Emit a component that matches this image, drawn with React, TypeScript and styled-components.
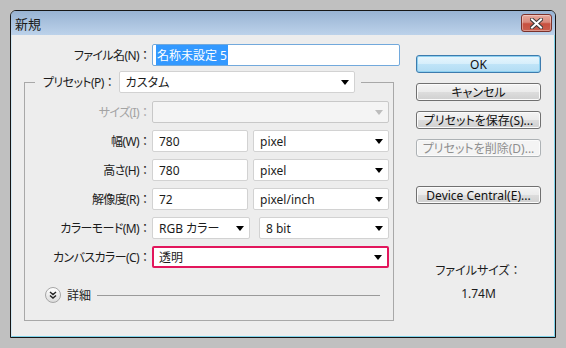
import styled, { createGlobalStyle } from "styled-components";

const GlobalStyle = createGlobalStyle`
  html, body {
    margin: 0;
    padding: 0;
  }
  body {
    width: 566px;
    height: 348px;
    overflow: hidden;
    background: #c0c0c0;
    font-family: "Noto Sans", "Noto Sans CJK JP", sans-serif;
    font-size: 12px;
    color: #1c1c1c;
    font-feature-settings: "palt";
  }
`;

const Stage = styled.div`
  padding: 10px;
`;

const Window = styled.div`
  width: 546px;
  height: 328px;
  box-sizing: border-box;
  border: 1px solid #161616;
  border-radius: 6px 6px 0 0;
  overflow: hidden;
  display: flex;
  flex-direction: column;
  background: #b9d0e8;
`;

const TitleBar = styled.div`
  height: 24px;
  flex: none;
  display: flex;
  align-items: center;
  justify-content: space-between;
  padding: 0 3px 0 4px;
  background: linear-gradient(#98b3d3, #bcd2ea);
`;

const Title = styled.span`
  font-size: 13px;
  color: #1a1a1a;
`;

const CloseButton = styled.div`
  width: 31px;
  height: 18px;
  box-sizing: border-box;
  border: 1px solid #7b312a;
  border-radius: 3px;
  display: flex;
  align-items: center;
  justify-content: center;
  background: linear-gradient(#e7a99d 0%, #d98a7c 45%, #c8503f 55%, #c95f4e 100%);
  box-shadow: inset 0 0 0 1px rgba(255, 255, 255, 0.35);
`;

const Body = styled.div`
  flex: 1;
  display: flex;
  gap: 16px;
  padding: 9px 0 0 12px;
  background: #ededed;
  border: 1px solid #7fd3ea;
  border-left-color: #cfe6f2;
  border-top: none;
`;

const FormColumn = styled.div`
  width: 376px;
  display: flex;
  flex-direction: column;
`;

const Row = styled.div<{ $label: number }>`
  height: 22px;
  display: grid;
  grid-template-columns: ${(p) => p.$label}px 1fr;
  align-items: center;
`;

const Label = styled.label<{ $disabled?: boolean }>`
  text-align: right;
  padding-right: 1px;
  white-space: nowrap;
  letter-spacing: -0.6px;
  color: ${(p) => (p.$disabled ? "#a3a3a3" : "#1c1c1c")};
`;

const Colon = styled.span`
  font-feature-settings: normal;
  letter-spacing: 0;
`;

const Pair = styled.div<{ $gap: number }>`
  display: flex;
  gap: ${(p) => p.$gap}px;
`;

const Field = styled.div<{
  $width?: number;
  $disabled?: boolean;
  $focus?: boolean;
  $marked?: boolean;
}>`
  box-sizing: border-box;
  width: ${(p) => (p.$width ? `${p.$width}px` : "100%")};
  height: 22px;
  display: flex;
  align-items: center;
  justify-content: space-between;
  padding: 0 5px 0 ${(p) => (p.$marked ? 5 : 6)}px;
  background: ${(p) => (p.$disabled ? "#f4f4f4" : "#ffffff")};
  border: ${(p) =>
    p.$marked
      ? "2px solid #e2165c"
      : `1px solid ${p.$focus ? "#72a9dc" : p.$disabled ? "#c8c8c8" : "#d2d2d2"}`};
  border-radius: 2px;
  white-space: nowrap;
`;

const Selected = styled.span`
  background: #3399ff;
  color: #ffffff;
  padding: 1px 1px;
  margin-left: -3px;
`;

const Arrow = ({ disabled }: { disabled?: boolean }) => (
  <svg width="8" height="5" viewBox="0 0 8 5">
    <polygon points="0,0 8,0 4,5" fill={disabled ? "#bdbdbd" : "#000"} />
  </svg>
);

const Group = styled.fieldset`
  margin: 5px 0 0 0;
  padding: 0 0 16px 0;
  width: 370px;
  box-sizing: border-box;
  border: 1px solid #a8a8a8;
  min-inline-size: 0;
`;

const Legend = styled.legend`
  margin-left: 10px;
  padding: 0 6px 0 8px;
  display: flex;
  align-items: center;
  gap: 2px;
  height: 22px;
`;

const GroupRows = styled.div`
  margin-top: 8px;
  display: flex;
  flex-direction: column;
  gap: 7px;
  padding-right: 4px;
`;

const DetailRow = styled.div`
  margin-top: 18px;
  height: 18px;
  display: flex;
  align-items: center;
  padding: 0 13px 0 20px;
`;

const RoundButton = styled.div`
  width: 16px;
  height: 16px;
  box-sizing: border-box;
  border-radius: 50%;
  border: 1px solid #a6a6a6;
  background: linear-gradient(#ffffff, #dcdcdc);
  display: flex;
  align-items: center;
  justify-content: center;
`;

const DetailText = styled.span`
  margin-left: 6px;
`;

const Rule = styled.div`
  flex: 1;
  height: 1px;
  margin-left: 6px;
  background: #9a9a9a;
`;

const ButtonColumn = styled.div`
  width: 125px;
  padding-top: 11px;
  display: flex;
  flex-direction: column;
  gap: 10px;
`;

const Button = styled.div<{ $primary?: boolean; $disabled?: boolean; $space?: number }>`
  height: 18px;
  box-sizing: border-box;
  margin-top: ${(p) => p.$space ?? 0}px;
  border: 1px solid
    ${(p) => (p.$primary ? "#3d7bad" : p.$disabled ? "#adb2b5" : "#707070")};
  border-radius: 3px;
  display: flex;
  align-items: center;
  justify-content: center;
  white-space: nowrap;
  color: ${(p) => (p.$disabled ? "#8f8f8f" : "#111")};
  background: ${(p) =>
    p.$primary
      ? "linear-gradient(#e8f6fd 0%, #d6eefb 50%, #c0e4f8 50%, #b2dcf3 100%)"
      : p.$disabled
        ? "#f4f4f4"
        : "linear-gradient(#f4f4f4 0%, #ebebeb 50%, #dddddd 50%, #d0d0d0 100%)"};
  box-shadow: inset 0 0 0 1px ${(p) => (p.$primary ? "#8ed0f0" : "#fbfbfb")};
`;

const SizeInfo = styled.div`
  margin-top: 49px;
  display: flex;
  flex-direction: column;
  align-items: center;
  gap: 7px;
  line-height: 16px;
`;

export default function App() {
  return (
    <>
      <GlobalStyle />
      <Stage>
        <Window>
          <TitleBar>
            <Title>新規</Title>
            <CloseButton>
              <svg width="13" height="11" viewBox="0 0 13 11">
                <path d="M2 1.5 L11 9.5 M11 1.5 L2 9.5" stroke="#3b3b3b" strokeWidth="4" strokeLinecap="square" />
                <path d="M2 1.5 L11 9.5 M11 1.5 L2 9.5" stroke="#ffffff" strokeWidth="2" strokeLinecap="square" />
              </svg>
            </CloseButton>
          </TitleBar>
          <Body>
            <FormColumn>
              <Row $label={128}>
                <Label>ファイル名(N)<Colon>：</Colon></Label>
                <Field $width={248} $focus>
                  <Selected>名称未設定 5</Selected>
                </Field>
              </Row>
              <Group>
                <Legend>
                  <Label>プリセット(P)<Colon>：</Colon></Label>
                  <Field $width={236}>
                    カスタム
                    <Arrow />
                  </Field>
                </Legend>
                <GroupRows>
                  <Row $label={127}>
                    <Label $disabled>サイズ(I)<Colon>：</Colon></Label>
                    <Field $disabled>
                      <span />
                      <Arrow disabled />
                    </Field>
                  </Row>
                  <Row $label={127}>
                    <Label>幅(W)<Colon>：</Colon></Label>
                    <Pair $gap={5}>
                      <Field $width={96}>780</Field>
                      <Field $width={136}>
                        pixel
                        <Arrow />
                      </Field>
                    </Pair>
                  </Row>
                  <Row $label={127}>
                    <Label>高さ(H)<Colon>：</Colon></Label>
                    <Pair $gap={5}>
                      <Field $width={96}>780</Field>
                      <Field $width={136}>
                        pixel
                        <Arrow />
                      </Field>
                    </Pair>
                  </Row>
                  <Row $label={127}>
                    <Label>解像度(R)<Colon>：</Colon></Label>
                    <Pair $gap={5}>
                      <Field $width={96}>72</Field>
                      <Field $width={136}>
                        pixel/inch
                        <Arrow />
                      </Field>
                    </Pair>
                  </Row>
                  <Row $label={127}>
                    <Label>カラーモード(M)<Colon>：</Colon></Label>
                    <Pair $gap={9}>
                      <Field $width={98}>
                        RGB カラー
                        <Arrow />
                      </Field>
                      <Field $width={130}>
                        8 bit
                        <Arrow />
                      </Field>
                    </Pair>
                  </Row>
                  <Row $label={127}>
                    <Label>カンバスカラー(C)<Colon>：</Colon></Label>
                    <Field $marked>
                      透明
                      <Arrow />
                    </Field>
                  </Row>
                </GroupRows>
                <DetailRow>
                  <RoundButton>
                    <svg width="8" height="8" viewBox="0 0 8 8">
                      <path d="M1 1 L4 3.5 L7 1 M1 4.5 L4 7 L7 4.5" fill="none" stroke="#222" strokeWidth="1.4" />
                    </svg>
                  </RoundButton>
                  <DetailText>詳細</DetailText>
                  <Rule />
                </DetailRow>
              </Group>
            </FormColumn>
            <ButtonColumn>
              <Button $primary>OK</Button>
              <Button>キャンセル</Button>
              <Button>プリセットを保存(S)...</Button>
              <Button $disabled>プリセットを削除(D)...</Button>
              <Button $space={19}>Device Central(E)...</Button>
              <SizeInfo>
                <span>ファイルサイズ<Colon>：</Colon></span>
                <span>1.74M</span>
              </SizeInfo>
            </ButtonColumn>
          </Body>
        </Window>
      </Stage>
    </>
  );
}
